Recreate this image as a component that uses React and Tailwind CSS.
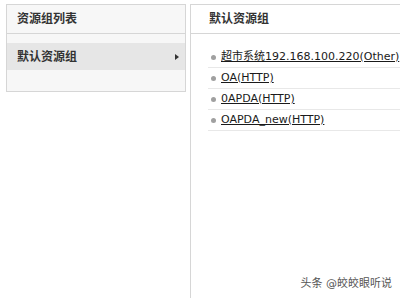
const font = { fontFamily: '"DejaVu Sans", "Noto Sans CJK SC", sans-serif' };

const items = [
  '超市系统192.168.100.220(Other)',
  'OA(HTTP)',
  '0APDA(HTTP)',
  'OAPDA_new(HTTP)',
];

export default function App() {
  return (
    <div className="relative w-[400px] h-[300px] bg-white flex items-start pt-[4px] overflow-hidden" style={font}>
      {/* left: group list */}
      <div className="ml-[6px] w-[180px] h-[88px] border border-[#d6d6d6] bg-[#f7f7f7] flex flex-col">
        <div className="h-[29px] border-b border-[#d6d6d6] flex items-center pl-[10px] text-[12px] font-bold text-[#333]">
          资源组列表
        </div>
        <div className="mt-[9px] h-[27px] bg-[#e6e6e6] flex items-center justify-between pl-[10px] pr-[6px] text-[12px] font-bold text-[#333]">
          <span>默认资源组</span>
          <span className="w-0 h-0 border-y-[3px] border-y-transparent border-l-[4px] border-l-[#333]" />
        </div>
      </div>

      {/* right: group detail */}
      <div className="ml-[4px] flex-1 h-[294px] border-l border-t border-[#d6d6d6] flex flex-col">
        <div className="h-[29px] border-b border-[#d6d6d6] flex items-center pl-[18px] text-[12px] font-bold text-[#333]">
          默认资源组
        </div>
        <ul className="mt-[13px] pl-[17px]">
          {items.map((t) => (
            <li key={t} className="h-[21px] border-b border-[#e8e8e8] flex items-center whitespace-nowrap">
              <span className="w-[5px] h-[5px] rounded-full bg-[#a0a0a0] ml-[3px] mr-[5px] shrink-0" />
              <span className="text-[11px] text-[#1a1a1a] underline">{t}</span>
            </li>
          ))}
        </ul>
      </div>

      <div className="absolute right-[8px] bottom-[8px] text-[11px] text-[#555]">头条 @皎皎眼听说</div>
    </div>
  );
}
